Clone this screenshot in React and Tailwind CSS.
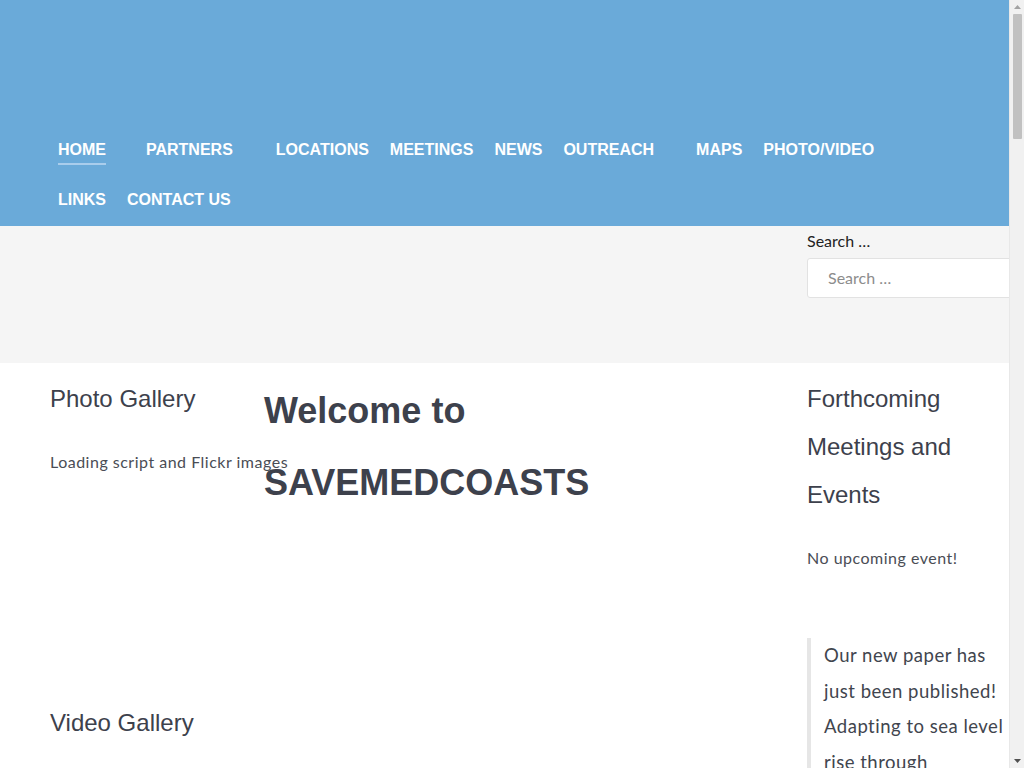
import React from 'react'

const navItems = [
  { label: 'HOME', pr: 'pr-[40px]', active: true },
  { label: 'PARTNERS', pr: 'pr-[43px]' },
  { label: 'LOCATIONS', pr: 'pr-[21px]' },
  { label: 'MEETINGS', pr: 'pr-[21px]' },
  { label: 'NEWS', pr: 'pr-[21px]' },
  { label: 'OUTREACH', pr: 'pr-[42px]' },
  { label: 'MAPS', pr: 'pr-[21px]' },
  { label: 'PHOTO/VIDEO', pr: 'pr-[21px]' },
  { label: 'LINKS', pr: 'pr-[21px]' },
  { label: 'CONTACT US', pr: 'pr-[21px]' },
]

const heading = "font-['Liberation_Sans',Arial,sans-serif] text-[#3d414c]"
const bodyFont = "font-['Lato','Noto_Sans',sans-serif]"

function Scrollbar() {
  return (
    <div className="fixed right-0 top-0 flex h-screen w-[15px] flex-col items-center border-l border-[#e8e8e8] bg-[#f1f1f1]">
      <svg width="15" height="14" viewBox="0 0 15 14" className="shrink-0">
        <path d="M4 9 L7.5 5 L11 9 Z" fill="#a3a3a3" />
      </svg>
      <div className="h-[125px] w-[9px] rounded-[1px] bg-[#c1c1c1]" />
      <div className="flex-1" />
      <svg width="15" height="14" viewBox="0 0 15 14" className="shrink-0">
        <path d="M4 5 L7.5 9 L11 5 Z" fill="#505050" />
      </svg>
    </div>
  )
}

export default function App() {
  return (
    <div className="min-h-[1400px] bg-white">
      <header className="h-[226px] bg-[#6aaad9] pt-[125px] pl-[58px]">
        <nav className="flex w-[850px] flex-wrap">
          {navItems.map(item => (
            <a
              key={item.label}
              href="#"
              className={`flex h-[50px] items-center ${item.pr} font-['Liberation_Sans',Arial,sans-serif] text-[16px] font-bold text-white`}
            >
              <span className="relative">
                {item.label}
                {item.active && (
                  <span className="absolute left-0 right-0 top-[25px] h-[2px] bg-[#a9cdec]" />
                )}
              </span>
            </a>
          ))}
        </nav>
      </header>

      <div className="flex h-[137px] bg-[#f5f5f5]">
        <div className="ml-[807px] flex-1 pt-[3px]">
          <label className={`${bodyFont} block text-[16px] leading-[24px] text-[#222]`}>Search …</label>
          <div className="mt-[5px] flex h-[40px] w-[240px] items-center rounded-[3px] border border-[#e2e2e2] bg-white pl-[20px]">
            <span className={`${bodyFont} text-[16px] text-[#8c8c8c]`}>Search …</span>
          </div>
        </div>
      </div>

      <main className="flex pt-[12px]">
        <aside className="ml-[50px] w-[214px] shrink-0">
          <h3 className={`${heading} text-[24px] leading-[48px]`}>Photo Gallery</h3>
          <p className={`${bodyFont} mt-[27px] whitespace-nowrap text-[16px] leading-[24px] tracking-[0.5px] text-[#4a4d55]`}>
            Loading script and Flickr images
          </p>
          <h3 className={`${heading} mt-[225px] text-[24px] leading-[48px]`}>Video Gallery</h3>
        </aside>

        <section className="w-[543px] shrink-0">
          <h1 className={`${heading} text-[36px] font-bold leading-[72px]`}>
            Welcome to
            <br />
            SAVEMEDCOASTS
          </h1>
        </section>

        <aside className="w-[202px] shrink-0">
          <h3 className={`${heading} text-[24px] leading-[48px]`}>
            Forthcoming
            <br />
            Meetings and
            <br />
            Events
          </h3>
          <p className={`${bodyFont} mt-[27px] text-[16px] leading-[24px] tracking-[0.5px] text-[#4a4d55]`}>
            No upcoming event!
          </p>
          <blockquote className="mt-[68px] border-l-[4px] border-[#e6e6e6] pl-[13px]">
            <p className={`${bodyFont} text-[18.5px] leading-[35.5px] tracking-[0.5px] text-[#41454e]`}>
              Our new paper has just been published! Adapting to sea level rise through ecosystem-based
              approaches in Mediterranean coastal areas.
            </p>
          </blockquote>
        </aside>
      </main>

      <Scrollbar />
    </div>
  )
}
